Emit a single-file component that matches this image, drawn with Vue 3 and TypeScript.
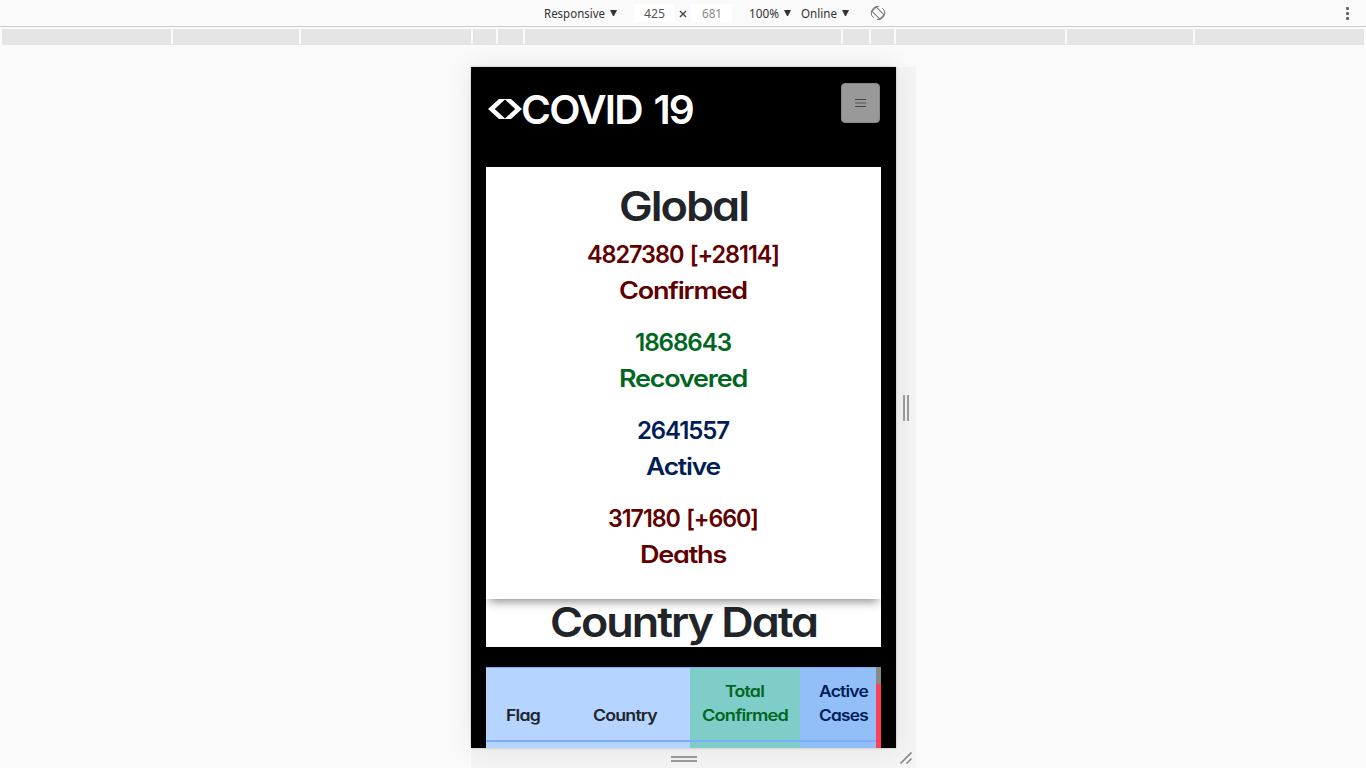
<script setup lang="ts">
import { h, type FunctionalComponent } from 'vue'

interface FitProps {
  text: string
  width: number
  size: number
}

// A line of text stretched to an exact advance width.
const FitText: FunctionalComponent<FitProps> = (p) =>
  h('svg', { class: 'fit', width: p.width, height: p.size, style: { fontSize: p.size + 'px' } }, [
    h('text', { x: 0, y: p.size * 0.85, textLength: p.width, lengthAdjust: 'spacingAndGlyphs', fill: 'currentColor' }, p.text),
  ])
FitText.props = ['text', 'width', 'size']

const ruler: number[] = [169, 126, 170, 23, 25, 316, 26, 23, 169, 126, 169]

const stats = [
  { value: '4827380 [+28114]', vw: 192, label: 'Confirmed', lw: 128, tone: 'maroon' },
  { value: '1868643', vw: 96, label: 'Recovered', lw: 128, tone: 'green' },
  { value: '2641557', vw: 92, label: 'Active', lw: 74, tone: 'navy' },
  { value: '317180 [+660]', vw: 150, label: 'Deaths', lw: 86, tone: 'maroon' },
]

const columns = [
  { cls: 'flag', lines: [{ text: 'Flag', w: 34 }] },
  { cls: 'country', lines: [{ text: 'Country', w: 64 }] },
  { cls: 'total', lines: [{ text: 'Total', w: 39 }, { text: 'Confirmed', w: 86 }] },
  { cls: 'active', lines: [{ text: 'Active', w: 49 }, { text: 'Cases', w: 49 }] },
]
</script>

<template>
  <div class="window">
    <div class="toolbar">
      <div class="select"><FitText text="Responsive" :width="61" :size="12" /><i class="caret"></i></div>
      <div class="field first"><FitText text="425" :width="21" :size="12" /></div>
      <span class="times"><svg width="8" height="8"><path d="M1 1L7 7M7 1L1 7" stroke="#444" stroke-width="1.4" /></svg></span>
      <div class="field dim"><FitText text="681" :width="20" :size="12" /></div>
      <div class="select zoom"><FitText text="100%" :width="30" :size="12" /><i class="caret"></i></div>
      <div class="select online"><FitText text="Online" :width="36" :size="12" /><i class="caret"></i></div>
      <svg class="rotate" width="16" height="16" fill="none" stroke="#777">
        <rect x="5" y="2.5" width="6" height="11" transform="rotate(-45 8 8)" />
        <path d="M1.7 10.5A6.7 6.7 0 0 1 9 1.4M14.3 5.5A6.7 6.7 0 0 1 7 14.6M1.7 10.5l2 2.2M14.3 5.5l-2-2.2" />
      </svg>
      <div class="more"><i></i><i></i><i></i></div>
    </div>

    <div class="ruler"><i v-for="(w, n) in ruler" :key="n" :style="{ width: w + 'px' }"></i></div>

    <div class="stage">
      <div class="device">
        <header class="head">
          <div class="brand">
            <svg class="mark" width="35" height="22" fill="#fff">
              <path d="M0 11L11 1H17.5L6.8 11L17.5 21H11Z" />
              <path d="M34 11L23 1H16.5L27.2 11L16.5 21H23Z" />
            </svg>
            <FitText text="COVID 19" :width="172" :size="40" />
          </div>
          <button class="menu">
            <svg width="11" height="9"><path d="M0 .5H11M0 7.5H11" stroke="#444" /><path d="M0 4H11" stroke="#777" stroke-width="2" /></svg>
          </button>
        </header>

        <section class="card">
          <h1><FitText text="Global" :width="129" :size="41" /></h1>
          <div v-for="s in stats" :key="s.label" class="stat" :class="s.tone">
            <div class="line"><FitText :text="s.value" :width="s.vw" :size="24" /></div>
            <div class="line"><FitText :text="s.label" :width="s.lw" :size="24" /></div>
          </div>
        </section>

        <section class="title"><FitText text="Country Data" :width="267" :size="41" /></section>

        <section class="table">
          <div v-for="c in columns" :key="c.cls" class="col" :class="c.cls">
            <div v-for="l in c.lines" :key="l.text" class="cell"><FitText :text="l.text" :width="l.w" :size="16" /></div>
          </div>
          <div class="scroll"></div>
        </section>
      </div>
      <div class="side"><i></i><i></i></div>
      <div class="bottom"><div class="grip"><i></i><i></i></div></div>
      <div class="corner"><svg width="12" height="12" stroke="#8d8d8d" stroke-width="1.7"><path d="M.5 11.5L11.5 .5M6.5 11.5L11.5 6.5" /></svg></div>
    </div>
  </div>
</template>

<style>
body { margin: 0; overflow: hidden; }
.fit { display: block; overflow: visible; flex: none; }
</style>

<style scoped>
* { box-sizing: border-box; }
.window { width: 1366px; height: 768px; background: #fafafa; overflow: hidden; display: flex; flex-direction: column; }
.toolbar { height: 27px; flex: none; border-bottom: 1px solid #ccc; display: flex; align-items: center; padding-left: 544px; font-family: "Noto Sans", sans-serif; color: #333; }
.select { display: flex; align-items: center; gap: 5px; }
.caret { border: 3.5px solid transparent; border-top: 6.5px solid #333; border-bottom: 0; width: 7px; }
.toolbar .fit { position: relative; top: 1px; }
.field { width: 41px; height: 18px; background: #fff; display: flex; align-items: center; justify-content: center; color: #555; }
.field.first { margin-left: 17px; }
.field.dim { color: #888; }
.times { width: 16px; display: flex; justify-content: center; padding-top: 1px; }
.zoom { margin-left: 17px; }
.online { margin-left: 10px; }
.rotate { margin-left: 21px; }
.more { margin-left: auto; width: 3px; margin-right: 17px; display: grid; gap: 2px; }
.more i { width: 3px; height: 3px; border-radius: 1px; background: #666; }
.ruler { margin: 2px 2px 0; height: 16px; flex: none; display: flex; justify-content: space-between; background: #fafafa; border-bottom: 1px solid #e5e5e5; }
.ruler i { background: #e5e5e5; }
.stage { margin: 22px 0 0 471px; display: grid; grid-template: 681px 20px / 425px 20px; width: 445px; }
.device { width: 425px; height: 681px; background: #000; padding: 0 15px; overflow: hidden; box-shadow: 0 0 26px rgba(0,0,0,.08), 0 0 2px rgba(0,0,0,.25); z-index: 1; font-family: Inter, "Open Sans", sans-serif; font-weight: 600; font-feature-settings: "cv11"; }
.device .fit { letter-spacing: -.045em; }
.side { background: #f4f4f4; display: flex; align-items: center; justify-content: center; gap: 2px; }
.side i { width: 2px; height: 26px; background: #9c9c9c; }
.bottom { background: #f4f4f4; display: flex; justify-content: center; padding-top: 2px; }
.grip { display: grid; align-content: center; gap: 2px; }
.grip i { width: 26px; height: 2px; background: #9c9c9c; }
.corner { background: #f4f4f4; display: flex; align-items: center; justify-content: center; }
.head { height: 100px; display: flex; justify-content: space-between; color: #fff; }
.brand { display: flex; padding-top: 23px; }
.brand .fit { word-spacing: .08em; }
.mark { margin: 8px -2px 0 2px; }
.menu { width: 39px; height: 40px; margin: 16px 1px 0 0; padding: 0; border: 1px solid #888; border-radius: 4px; background: #999; display: flex; align-items: center; justify-content: center; }
.card { height: 432px; background: #fff; position: relative; box-shadow: 0 5px 10px -3px rgba(0,0,0,.5); padding-top: 19px; }
h1 { margin: 0; height: 51px; color: #212529; display: flex; justify-content: center; font-weight: 600; padding-right: 1px; }
.stat { height: 88px; padding: 6px 1px 0 0; }
.line { height: 36px; display: flex; justify-content: center; word-spacing: .1em; }
.maroon { color: #600000; }
.green { color: #006622; }
.navy { color: #001d57; }
.title { height: 48px; background: #fff; color: #212529; display: flex; justify-content: center; padding: 3px 1px 0 0; overflow: hidden; }
.table { margin-top: 20px; height: 81px; display: flex; color: #212529; }
.col { height: 81px; padding-bottom: 21px; display: flex; flex-direction: column; justify-content: flex-end; border-top: 1px solid #7aaef8; background: linear-gradient(#7aaef8, #7aaef8) 0 72px / 100% 2px no-repeat #b5d4ff; }
.cell { height: 24px; display: flex; justify-content: center; padding-top: 4px; }
.flag { width: 74px; }
.country { width: 130px; }
.total { width: 110px; padding-right: 1px; color: #006622; background-color: #7fcdc8; }
.active { width: 76px; padding-left: 11px; color: #001d57; background-color: #92bff8; }
.scroll { width: 5px; background: linear-gradient(#888 17px, #ff4057 17px); }
</style>
